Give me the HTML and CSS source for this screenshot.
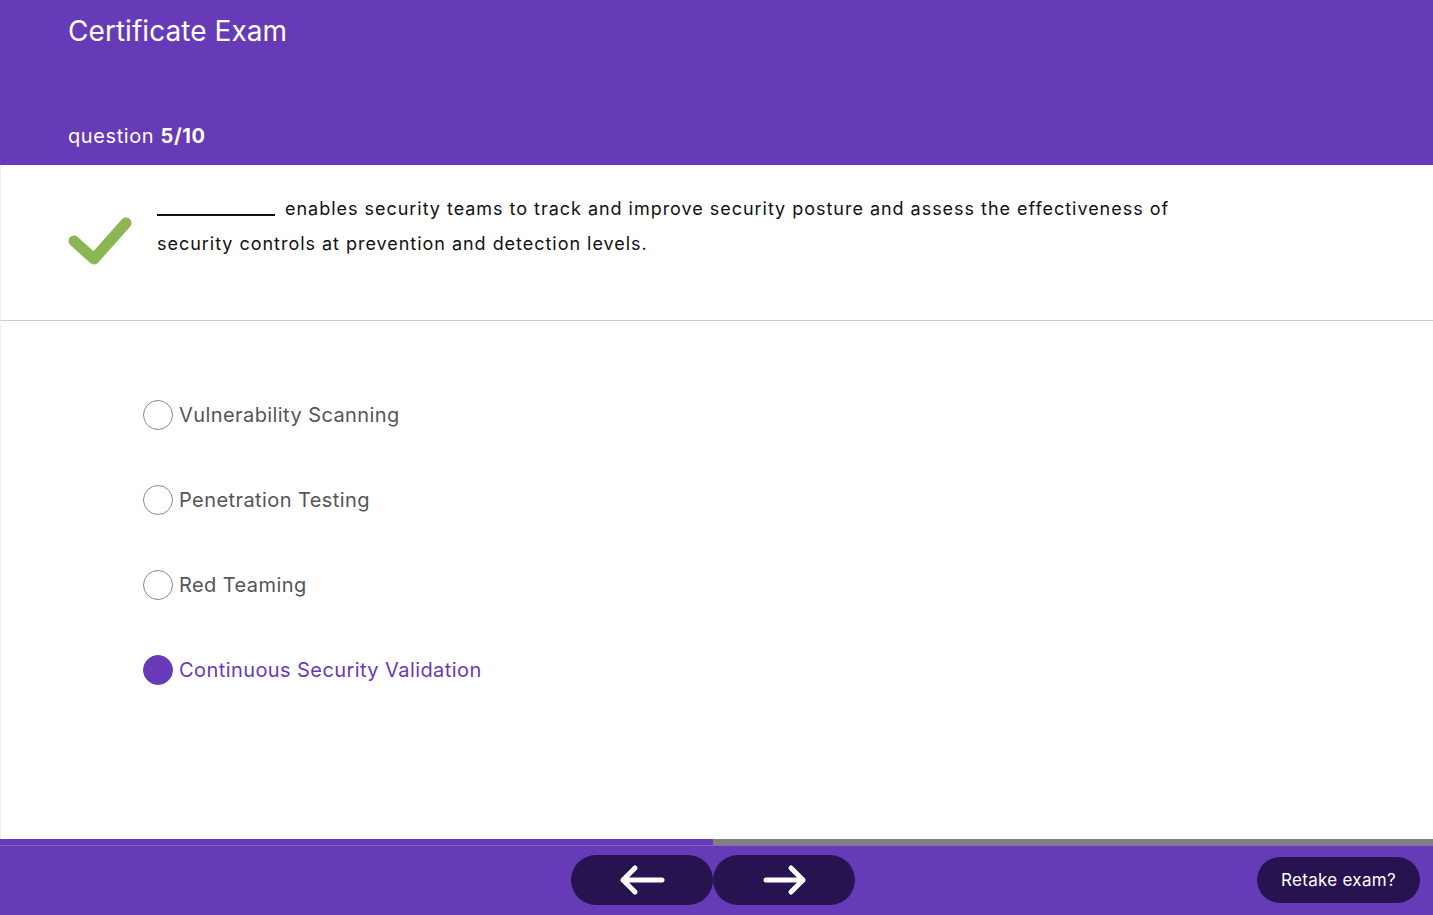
FILE: index.html
```html
<!DOCTYPE html>
<html lang="en">
<head>
<meta charset="utf-8">
<title>Certificate Exam</title>
<link rel="stylesheet" href="styles.css">
</head>
<body>
<div class="page">
  <header class="header">
    <h1 class="title">Certificate Exam</h1>
    <div class="counter">question <b>5/10</b></div>
  </header>
  <section class="question">
    <svg class="check" width="64" height="50" viewBox="0 0 64 50">
      <polyline points="6,26 26,44 58,8" fill="none" stroke="#8bb653" stroke-width="11" stroke-linecap="round" stroke-linejoin="round"/>
    </svg>
    <p class="qtext"><span class="blank"></span> enables security teams to track and improve security posture and assess the effectiveness of security controls at prevention and detection levels.</p>
  </section>
  <section class="options">
    <label class="option"><span class="radio"></span><span class="label">Vulnerability Scanning</span></label>
    <label class="option"><span class="radio"></span><span class="label">Penetration Testing</span></label>
    <label class="option"><span class="radio"></span><span class="label">Red Teaming</span></label>
    <label class="option selected"><span class="radio"></span><span class="label">Continuous Security Validation</span></label>
  </section>
  <div class="progress"><div class="progress-fill" style="width: 49.76%"></div></div>
  <footer class="footer">
    <div class="nav">
      <button class="navbtn" aria-label="Previous">
        <svg width="46" height="32" viewBox="0 0 46 32"><path d="M43 16H4M16 4L4 16L16 28" fill="none" stroke="#fff" stroke-width="5" stroke-linecap="round" stroke-linejoin="round"/></svg>
      </button>
      <button class="navbtn" aria-label="Next">
        <svg width="46" height="32" viewBox="0 0 46 32"><path d="M5 16H42M30 4L42 16L30 28" fill="none" stroke="#fff" stroke-width="5" stroke-linecap="round" stroke-linejoin="round"/></svg>
      </button>
    </div>
    <button class="retake">Retake exam?</button>
  </footer>
</div>
</body>
</html>
```
FILE: styles.css
```css
* { box-sizing: border-box; }
html, body { margin: 0; padding: 0; }
body {
  font-family: Inter, "Liberation Sans", sans-serif;
  background: #fff;
  width: 1433px;
  height: 915px;
  overflow: hidden;
}
.page {
  display: flex;
  flex-direction: column;
  height: 915px;
}
.header {
  background: #673ab7;
  color: #fff;
  height: 165px;
  padding: 14px 0 0 68px;
  display: flex;
  flex-direction: column;
}
.title {
  margin: 0;
  font-size: 28px;
  font-weight: 400;
  line-height: 34px;
  letter-spacing: 0.05px;
}
.counter {
  margin-top: 75px;
  font-size: 20px;
  line-height: 26px;
  letter-spacing: 0.6px;
}
.counter b { font-weight: 700; }
.question {
  height: 156px;
  border-bottom: 1px solid #cccccc;
  border-left: 1px solid #f0f0f0;
  display: flex;
  align-items: flex-start;
  padding: 26px 0 0 67px;
}
.check {
  flex: none;
  margin-top: 24px;
}
.qtext {
  margin: 0 0 0 25px;
  width: 1060px;
  font-size: 18px;
  line-height: 35px;
  color: #111;
  letter-spacing: 0.97px;
}
.blank {
  display: inline-block;
  width: 118px;
  border-bottom: 2px solid #111;
  vertical-align: -1px;
  margin-right: 4px;
}
.options {
  flex: 1;
  border-left: 1px solid #f0f0f0;
  padding: 79px 0 0 142px;
  display: flex;
  flex-direction: column;
  gap: 55px;
}
.option {
  display: flex;
  align-items: center;
  height: 30px;
  gap: 6px;
  cursor: pointer;
}
.radio {
  width: 30px;
  height: 30px;
  border-radius: 50%;
  border: 1px solid #8a8a8a;
  flex: none;
}
.label {
  font-size: 20px;
  color: #555;
  letter-spacing: 0.42px;
}
.option.selected .radio {
  background: #673ab7;
  border-color: #673ab7;
}
.option.selected .label { color: #673ab7; }
.progress {
  height: 6px;
  background: #808080;
  flex: none;
}
.progress-fill {
  height: 100%;
  background: #673ab7;
}
.footer {
  flex: none;
  height: 70px;
  background: #673ab7;
  border-top: 1px solid #8366c8;
  display: flex;
  align-items: flex-start;
  justify-content: center;
  padding-top: 9px;
  position: relative;
}
.nav {
  display: flex;
  margin-right: 7px;
}
.navbtn {
  width: 142px;
  height: 50px;
  border-radius: 25px;
  background: #271350;
  border: none;
  display: flex;
  align-items: center;
  justify-content: center;
  padding: 0;
  cursor: pointer;
}
.retake {
  position: absolute;
  right: 13px;
  top: 11px;
  width: 163px;
  height: 46px;
  border-radius: 23px;
  background: #271350;
  border: none;
  color: #fff;
  font-family: Inter, "Liberation Sans", sans-serif;
  font-size: 17px;
  letter-spacing: 0.3px;
  cursor: pointer;
}
```
